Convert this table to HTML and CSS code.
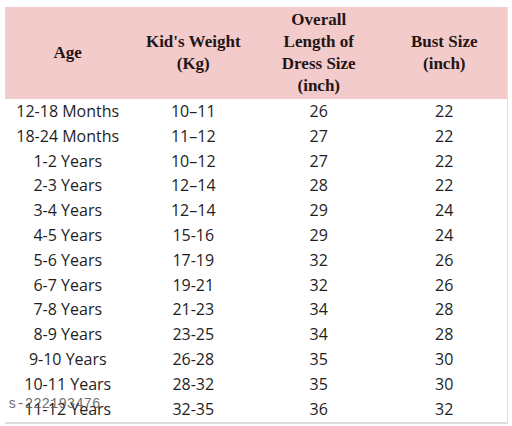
FILE: index.html
```html
<!DOCTYPE html>
<html lang="en">
<head>
    <meta charset="UTF-8">
    <meta name="viewport" content="width=device-width, initial-scale=1.0">
    <title>Size Chart</title>
    <link rel="stylesheet" href="styles.css">
</head>
<body>
    <div class="chart">
        <table class="size-table">
            <thead>
                <tr>
                    <th>Age</th>
                    <th>Kid's Weight<br>(Kg)</th>
                    <th>Overall<br>Length of<br>Dress Size<br>(inch)</th>
                    <th>Bust Size<br>(inch)</th>
                </tr>
            </thead>
            <tbody>
                <tr><td>12-18 Months</td><td>10&ndash;11</td><td>26</td><td>22</td></tr>
                <tr><td>18-24 Months</td><td>11&ndash;12</td><td>27</td><td>22</td></tr>
                <tr><td>1-2 Years</td><td>10&ndash;12</td><td>27</td><td>22</td></tr>
                <tr><td>2-3 Years</td><td>12&ndash;14</td><td>28</td><td>22</td></tr>
                <tr><td>3-4 Years</td><td>12&ndash;14</td><td>29</td><td>24</td></tr>
                <tr><td>4-5 Years</td><td>15-16</td><td>29</td><td>24</td></tr>
                <tr><td>5-6 Years</td><td>17-19</td><td>32</td><td>26</td></tr>
                <tr><td>6-7 Years</td><td>19-21</td><td>32</td><td>26</td></tr>
                <tr><td>7-8 Years</td><td>21-23</td><td>34</td><td>28</td></tr>
                <tr><td>8-9 Years</td><td>23-25</td><td>34</td><td>28</td></tr>
                <tr><td>9-10 Years</td><td>26-28</td><td>35</td><td>30</td></tr>
                <tr><td>10-11 Years</td><td>28-32</td><td>35</td><td>30</td></tr>
                <tr><td>11-12 Years</td><td>32-35</td><td>36</td><td>32</td></tr>
            </tbody>
        </table>
        <span class="watermark">s-222193476</span>
    </div>
</body>
</html>
```

FILE: styles.css
```css
body {
    margin: 0;
    padding: 7px 0 0 5px;
    background-color: #fff;
}
.chart {
    position: relative;
    width: 502px;
    padding-bottom: 1px;
    border-right: 1px solid #e2e2e2;
    border-bottom: 2px solid #dcdcdc;
}
.size-table {
    width: 502px;
    border-collapse: collapse;
    table-layout: fixed;
}
.size-table th {
    height: 92px;
    padding: 0;
    background-color: #f3cbcb;
    color: #241515;
    font-family: "Liberation Serif", serif;
    font-size: 17px;
    font-weight: bold;
    line-height: 22px;
    text-align: center;
    vertical-align: middle;
}
.size-table td {
    height: 24.8px;
    padding: 0;
    color: #1e1e1e;
    font-family: "Open Sans", sans-serif;
    font-size: 16px;
    line-height: 24.8px;
    text-align: center;
}
.watermark {
    position: absolute;
    left: 3px;
    bottom: 11px;
    color: #555;
    font-family: "Liberation Mono", monospace;
    font-size: 14px;
    line-height: 14px;
    opacity: 0.85;
}
```
